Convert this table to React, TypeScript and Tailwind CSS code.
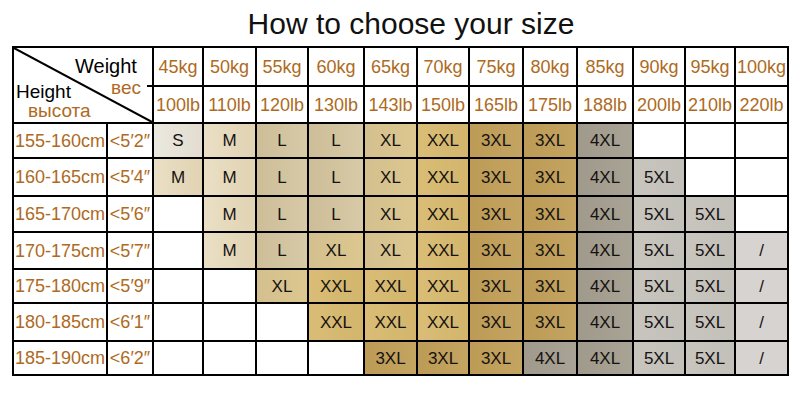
import React from "react";

const weights = ["45kg", "50kg", "55kg", "60kg", "65kg", "70kg", "75kg", "80kg", "85kg", "90kg", "95kg", "100kg"];
const pounds = ["100lb", "110lb", "120lb", "130lb", "143lb", "150lb", "165lb", "175lb", "188lb", "200lb", "210lb", "220lb"];

const rows: { cm: string; inch: string; sizes: string[] }[] = [
  { cm: "155-160cm", inch: "<5′2″", sizes: ["S", "M", "L", "L", "XL", "XXL", "3XL", "3XL", "4XL", "", "", ""] },
  { cm: "160-165cm", inch: "<5′4″", sizes: ["M", "M", "L", "L", "XL", "XXL", "3XL", "3XL", "4XL", "5XL", "", ""] },
  { cm: "165-170cm", inch: "<5′6″", sizes: ["", "M", "L", "L", "XL", "XXL", "3XL", "3XL", "4XL", "5XL", "5XL", ""] },
  { cm: "170-175cm", inch: "<5′7″", sizes: ["", "M", "L", "XL", "XL", "XXL", "3XL", "3XL", "4XL", "5XL", "5XL", "/"] },
  { cm: "175-180cm", inch: "<5′9″", sizes: ["", "", "XL", "XXL", "XXL", "XXL", "3XL", "3XL", "4XL", "5XL", "5XL", "/"] },
  { cm: "180-185cm", inch: "<6′1″", sizes: ["", "", "", "XXL", "XXL", "XXL", "3XL", "3XL", "4XL", "5XL", "5XL", "/"] },
  { cm: "185-190cm", inch: "<6′2″", sizes: ["", "", "", "", "3XL", "3XL", "3XL", "4XL", "4XL", "5XL", "5XL", "/"] },
];

const sizeStyle: Record<string, string> = {
  S: "bg-linear-to-r from-[#ebe8df] to-[#e2ddcf]",
  M: "bg-linear-to-r from-[#eadfc5] to-[#e1d3b3]",
  L: "bg-linear-to-r from-[#cdbd98] to-[#d8caa7]",
  XL: "bg-linear-to-r from-[#d4c08f] to-[#dcc78f]",
  XXL: "bg-linear-to-r from-[#d9bd76] to-[#d3b56c]",
  "3XL": "bg-linear-to-r from-[#bb9b55] to-[#c4a461]",
  "4XL": "bg-linear-to-r from-[#9f9a8b] to-[#a8a394]",
  "5XL": "bg-linear-to-r from-[#c8c5bf] to-[#c3c0ba]",
  "/": "bg-[#d6d3d0]",
  "": "bg-white",
};

const orange = "text-[#ae6a22]";

function DiagonalHeader() {
  return (
    <div className="relative col-span-2 row-span-2 bg-white overflow-hidden">
      <svg className="absolute inset-0 w-full h-full" viewBox="0 0 138 74" preserveAspectRatio="none">
        <line x1="0" y1="0" x2="138" y2="74" stroke="#000" strokeWidth="2" vectorEffect="non-scaling-stroke" />
      </svg>
      <div className="relative flex flex-col pt-[9px] leading-[18px]">
        <div className="pl-[61px] text-[20px] text-black">Weight</div>
        <div className="mt-[3px] flex items-start justify-between text-[19px]">
          <span className="mt-[5px] pl-[2px] text-black">Height</span>
          <span className={`mt-[1px] pr-[11px] ${orange}`}>вес</span>
        </div>
        <div className={`mt-[1px] pl-[14px] text-[19px] ${orange}`}>высота</div>
      </div>
      <div className="absolute right-0 top-[37px] w-[5px] h-[2px] bg-black" />
    </div>
  );
}

export default function App() {
  return (
    <div
      className="w-[800px] h-[400px] bg-white overflow-hidden"
      style={{ fontFamily: '"Liberation Sans", Arial, sans-serif' }}
    >
      <div className="h-[46px] pt-[9px] pl-[22px] text-center text-[30px] leading-[30px] text-[#111]">
        How to choose your size
      </div>
      <div className="ml-[12px] inline-grid bg-black p-[2px] gap-[2px] grid-cols-[92px_44px_48px_51px_50px_54px_51px_50px_52px_52px_54px_50px_48px_51px] grid-rows-[37px_35px_33px_36px_34px_35px_32px_36px_32px]">
        <DiagonalHeader />
        {weights.map((w) => (
          <div key={w} className={`bg-white flex items-center justify-center text-[18px] leading-none ${orange}`}>
            {w}
          </div>
        ))}
        {pounds.map((p) => (
          <div key={p} className={`bg-white flex items-center justify-center text-[18px] leading-none ${orange}`}>
            {p}
          </div>
        ))}
        {rows.map((r) => (
          <React.Fragment key={r.cm}>
            <div className={`bg-white flex items-center justify-center text-[18px] leading-none whitespace-nowrap ${orange}`}>
              {r.cm}
            </div>
            <div className={`bg-white flex items-center justify-center text-[18px] leading-none whitespace-nowrap ${orange}`}>
              {r.inch}
            </div>
            {r.sizes.map((s, i) => (
              <div
                key={i}
                className={`flex items-center justify-center text-[17px] leading-none text-[#161210] ${sizeStyle[s]}`}
              >
                {s}
              </div>
            ))}
          </React.Fragment>
        ))}
      </div>
    </div>
  );
}
